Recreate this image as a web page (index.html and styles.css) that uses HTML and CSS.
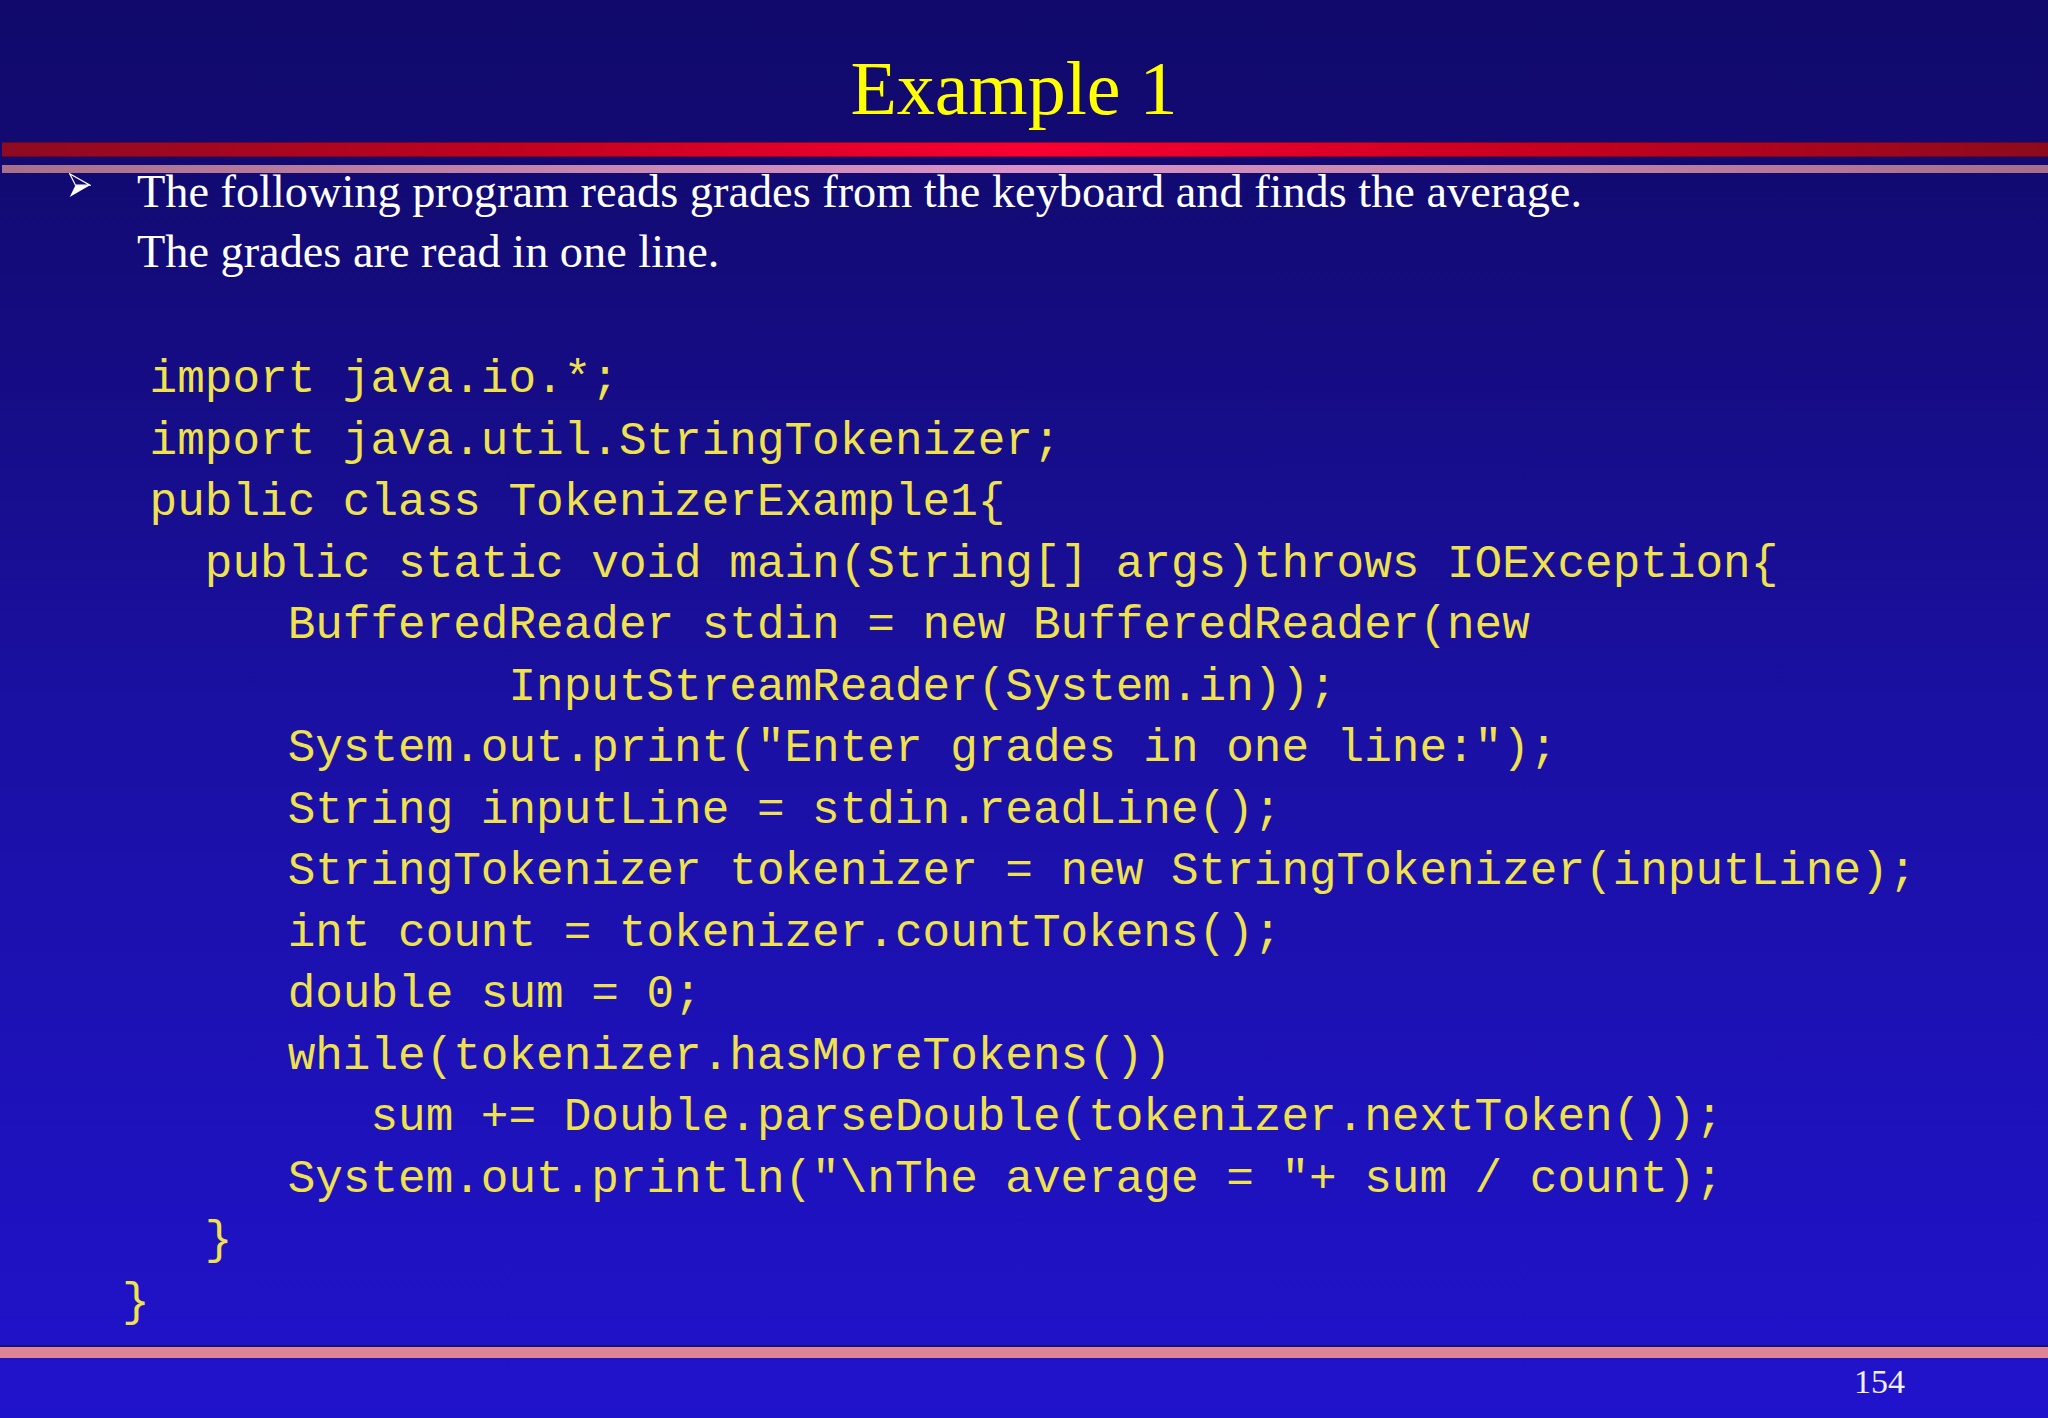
FILE: index.html
```html
<!DOCTYPE html>
<html lang="en">
<head>
<meta charset="utf-8">
<title>Example 1</title>
<link rel="stylesheet" href="styles.css">
</head>
<body>
<div class="slide">
  <h1 class="title">Example 1</h1>
  <div class="bar bar-red"></div>
  <div class="bar bar-pink"></div>
  <div class="content">
    <div class="bullet">
      <svg class="arrow" width="22" height="25" viewBox="0 0 22 25" aria-hidden="true">
        <polygon points="0.7,0.7 21,12.2 6.5,12.2" fill="none" stroke="#ffffff" stroke-width="1.2" stroke-linejoin="miter"/>
        <polygon points="6.5,12.2 21,12.2 0.7,24" fill="#ffffff"/>
      </svg>
      <p class="bullet-text">The following program reads grades from the keyboard and finds the average.<br>The grades are read in one line.</p>
    </div>
<pre class="code"> import java.io.*;
 import java.util.StringTokenizer;
 public class TokenizerExample1{
   public static void main(String[] args)throws IOException{
      BufferedReader stdin = new BufferedReader(new
              InputStreamReader(System.in));
      System.out.print("Enter grades in one line:");
      String inputLine = stdin.readLine();
      StringTokenizer tokenizer = new StringTokenizer(inputLine);
      int count = tokenizer.countTokens();
      double sum = 0;
      while(tokenizer.hasMoreTokens())
         sum += Double.parseDouble(tokenizer.nextToken());
      System.out.println("\nThe average = "+ sum / count);
   }
}</pre>
  </div>
  <div class="footer-bar"></div>
  <div class="page-no">154</div>
</div>
</body>
</html>
```

FILE: styles.css
```css
* { box-sizing: border-box; }

html, body {
  margin: 0;
  padding: 0;
}

body {
  width: 2048px;
  height: 1418px;
  overflow: hidden;
  background: #140c7a;
}

.slide {
  width: 2048px;
  height: 1418px;
  display: flex;
  flex-direction: column;
  background: linear-gradient(180deg, #110a6c 0%, #120a72 12%, #1a10a2 50%, #2013cc 100%);
  font-family: "Liberation Serif", "Times New Roman", serif;
}

.title {
  margin: 50px 0 0 0;
  padding-right: 20px;
  height: 76px;
  font-family: "Liberation Serif", "Times New Roman", serif;
  font-weight: normal;
  font-size: 76px;
  line-height: 76px;
  color: #ffff00;
  text-align: center;
}

.bar {
  margin-left: 2px;
}

.bar-red {
  margin-top: 16px;
  height: 15px;
  background: linear-gradient(90deg, #8e0a22 0%, #c0021e 25%, #fa0030 50%, #c8001e 75%, #8c0a1c 100%);
  box-shadow: inset 0 1px 0 rgba(60, 0, 40, 0.5), inset 0 -1px 0 rgba(60, 0, 40, 0.5);
}

.bar-pink {
  margin-top: 8px;
  height: 8px;
  background: linear-gradient(90deg, #a87088 0%, #c688b0 30%, #da92c6 50%, #c688ac 70%, #a66e88 100%);
}

.content {
  margin-top: -11px;
}

.bullet {
  display: flex;
  align-items: flex-start;
}

.arrow {
  flex: none;
  margin: 11px 0 0 69px;
}

.bullet-text {
  margin: 0 0 0 46px;
  font-size: 46.3px;
  line-height: 60px;
  color: #ffffff;
}

.code {
  margin: 68px 0 0 0;
  padding-left: 122px;
  font-family: "Liberation Mono", "Courier New", monospace;
  font-size: 46px;
  line-height: 61.5px;
  color: #efe24e;
  white-space: pre;
}

.footer-bar {
  margin-top: 11px;
  height: 13px;
  border-top: 2px solid #16107a;
  background: #e08494;
}

.page-no {
  margin-top: 7px;
  padding-right: 143px;
  font-size: 34px;
  line-height: 34px;
  color: #f0eef8;
  text-align: right;
}
```
